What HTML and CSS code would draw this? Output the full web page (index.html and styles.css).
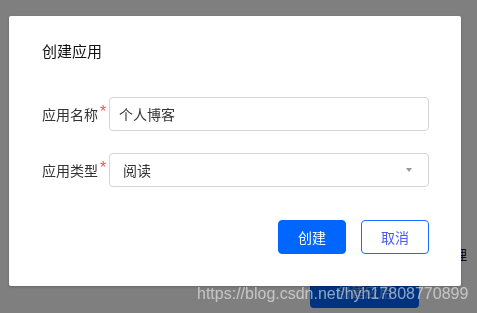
FILE: index.html
```html
<!DOCTYPE html>
<html lang="zh">
<head>
<meta charset="utf-8">
<link rel="stylesheet" href="styles.css">
</head>
<body>
<div class="page">
  <div class="page-link">管理</div>
  <div class="page-btn">创建应用</div>
</div>
<div class="overlay">
  <div class="dialog">
    <div class="dialog-title">创建应用</div>
    <div class="form">
      <div class="form-row">
        <label class="form-label">应用名称<span class="req">*</span></label>
        <div class="input">个人博客</div>
      </div>
      <div class="form-row">
        <label class="form-label">应用类型<span class="req">*</span></label>
        <div class="input select">阅读<span class="caret"></span></div>
      </div>
    </div>
    <div class="actions">
      <button class="btn btn-primary">创建</button>
      <button class="btn btn-outline">取消</button>
    </div>
  </div>
</div>
<div class="watermark">https://blog.csdn.net/hyh17808770899</div>
</body>
</html>
```
FILE: styles.css
```css
html, body {
  margin: 0;
  padding: 0;
}
body {
  width: 477px;
  height: 313px;
  overflow: hidden;
  background: #fff;
  font-family: "Noto Sans CJK SC", "Noto Sans", sans-serif;
}
.page {
  padding: 244px 10px 0 0;
}
.page-link {
  text-align: right;
  font-size: 14px;
  line-height: 20px;
  color: #1a1a2e;
}
.page-btn {
  margin: 10px 0 0 310px;
  width: 109px;
  height: 34px;
  border-radius: 4px;
  background: #0066ff;
  color: rgba(255, 255, 255, 0.5);
  font-size: 14px;
  line-height: 34px;
  text-align: center;
}
.overlay {
  position: fixed;
  inset: 0;
  background: rgba(0, 0, 0, 0.5);
  padding: 16px 0 0 9px;
}
.dialog {
  width: 452px;
  height: 270px;
  box-sizing: border-box;
  background: #fff;
  border-radius: 2px;
  box-shadow: 0 1px 3px rgba(0, 0, 0, 0.2);
  padding: 24px 32px 0 33px;
}
.dialog-title {
  font-size: 15px;
  line-height: 22px;
  color: #111;
}
.form {
  margin-top: 35px;
  display: flex;
  flex-direction: column;
  gap: 22px;
}
.form-row {
  display: grid;
  grid-template-columns: 67px 320px;
  align-items: center;
}
.form-label {
  font-size: 14px;
  color: #333;
  display: flex;
  align-items: center;
}
.req {
  color: #ff4d4f;
  font-family: "Liberation Sans", sans-serif;
  font-size: 16px;
  margin-left: 2px;
  position: relative;
  top: -2px;
}
.input {
  height: 34px;
  box-sizing: border-box;
  border: 1px solid #d4d4d4;
  border-radius: 4px;
  padding-left: 9px;
  font-size: 14px;
  line-height: 32px;
  color: #333;
  display: flex;
  align-items: center;
}
.select {
  padding-left: 13px;
  padding-right: 16px;
  justify-content: space-between;
}
.caret {
  width: 0;
  height: 0;
  border-left: 3px solid transparent;
  border-right: 3px solid transparent;
  border-top: 4px solid #999;
}
.actions {
  margin-top: 33px;
  display: flex;
  justify-content: flex-end;
  gap: 15px;
}
.btn {
  width: 68px;
  height: 34px;
  box-sizing: border-box;
  border-radius: 4px;
  font-family: "Noto Sans CJK SC", "Noto Sans", sans-serif;
  font-size: 14px;
  padding: 0;
}
.btn-primary {
  background: #0066ff;
  border: 1px solid #0066ff;
  color: #fff;
}
.btn-outline {
  background: #fff;
  border: 1px solid #1a6dff;
  color: #4a5cf5;
}
.watermark {
  position: fixed;
  left: 197px;
  top: 285px;
  font-family: "Liberation Sans", Arial, sans-serif;
  font-size: 16px;
  line-height: 18px;
  color: rgba(255, 255, 255, 0.55);
  white-space: nowrap;
}
```
